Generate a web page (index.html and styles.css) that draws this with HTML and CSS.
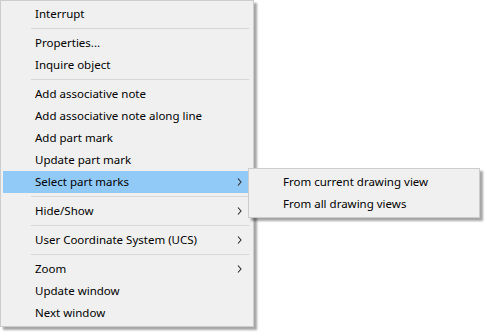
FILE: index.html
```html
<!DOCTYPE html>
<html lang="en">
<head>
  <meta charset="UTF-8">
  <title>Context menu</title>
  <link rel="stylesheet" href="styles.css">
</head>
<body>
  <div class="desktop">
    <ul class="menu main-menu">
      <li class="item">Interrupt</li>
      <li class="separator"></li>
      <li class="item">Properties...</li>
      <li class="item">Inquire object</li>
      <li class="separator"></li>
      <li class="item">Add associative note</li>
      <li class="item">Add associative note along line</li>
      <li class="item">Add part mark</li>
      <li class="item">Update part mark</li>
      <li class="item has-sub active">Select part marks
        <svg class="chevron" width="5" height="8" viewBox="0 0 5 8"><path d="M1 0.5 L4 4 L1 7.5" fill="none" stroke="#2b2b2b" stroke-width="1.1"/></svg>
      </li>
      <li class="separator"></li>
      <li class="item has-sub">Hide/Show
        <svg class="chevron" width="5" height="8" viewBox="0 0 5 8"><path d="M1 0.5 L4 4 L1 7.5" fill="none" stroke="#2b2b2b" stroke-width="1.1"/></svg>
      </li>
      <li class="separator"></li>
      <li class="item has-sub">User Coordinate System (UCS)
        <svg class="chevron" width="5" height="8" viewBox="0 0 5 8"><path d="M1 0.5 L4 4 L1 7.5" fill="none" stroke="#2b2b2b" stroke-width="1.1"/></svg>
      </li>
      <li class="separator"></li>
      <li class="item has-sub">Zoom
        <svg class="chevron" width="5" height="8" viewBox="0 0 5 8"><path d="M1 0.5 L4 4 L1 7.5" fill="none" stroke="#2b2b2b" stroke-width="1.1"/></svg>
      </li>
      <li class="item">Update window</li>
      <li class="item">Next window</li>
    </ul>

    <ul class="menu sub-menu">
      <li class="item">From current drawing view</li>
      <li class="item">From all drawing views</li>
    </ul>
  </div>
</body>
</html>
```

FILE: styles.css
```css
body {
  margin: 0;
  background-color: #ffffff;
}

.desktop {
  position: relative;
  width: 492px;
  height: 336px;
}

.menu {
  margin: 0;
  padding: 2px 4px 2px 2px;
  list-style: none;
  background-color: #f0f0f0;
  border: 1px solid #cccccc;
  box-shadow: 3px 3px 2px rgba(0, 0, 0, 0.35);
  font-family: "Noto Sans", sans-serif;
  font-size: 11.5px;
  color: #000000;
}

.main-menu {
  width: 246px;
}

.menu .item {
  box-sizing: border-box;
  height: 22px;
  padding: 0 0 2px 32px;
  display: flex;
  align-items: center;
  justify-content: space-between;
  white-space: nowrap;
}

.menu .item.active {
  background-color: #91c9f7;
}

.menu .item .chevron {
  margin: 2px 7px 0 0;
}

.menu .separator {
  height: 1px;
  margin: 3px 0 3px 28px;
  background-color: #d7d7d7;
}

.sub-menu {
  position: absolute;
  left: 248px;
  top: 168px;
  width: 224px;
}
```
